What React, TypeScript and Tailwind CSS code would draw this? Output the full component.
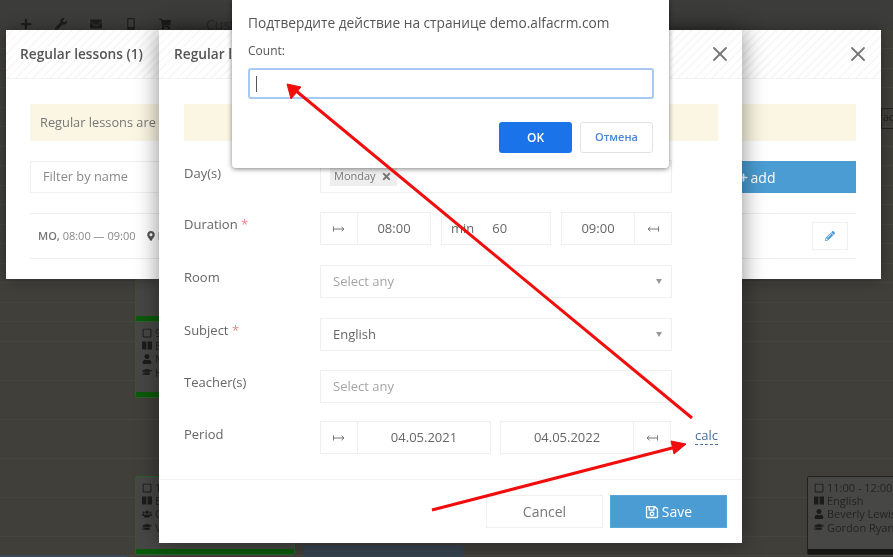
import { X } from 'lucide-react';
import {
  FaEnvelope,
  FaGraduationCap,
  FaMapMarkerAlt,
  FaMobileAlt,
  FaPencilAlt,
  FaPlus,
  FaRegSave,
  FaRegSquare,
  FaShoppingCart,
  FaTimes,
  FaUser,
  FaUsers,
  FaWrench,
} from 'react-icons/fa';

const hatch =
  'bg-[repeating-linear-gradient(135deg,#ffffff_0px,#ffffff_4px,#f8f8f8_4px,#f8f8f8_6px)]';

const BookIcon = () => (
  <svg width="10" height="9" viewBox="0 0 10 9" fill="currentColor">
    <path d="M0 0.5h4.4v8H0zM5.6 0.5H10v8H5.6z" />
  </svg>
);

const ArrowCell = ({ flip = false }: { flip?: boolean }) => (
  <div className="flex h-full w-[36px] shrink-0 items-center justify-center">
    <svg width="12" height="8" viewBox="0 0 12 8" className={flip ? 'rotate-180' : ''} fill="none" stroke="#777" strokeWidth="1">
      <path d="M0.5 1.5v5M0.5 4h10.5M8.5 1.8L11 4L8.5 6.2" />
    </svg>
  </div>
);

const Field = ({ label, required, children, cls, labelCls = 'pt-[3px]' }: { label: string; required?: boolean; children: React.ReactNode; cls: string; labelCls?: string }) => (
  <div className={`flex ${cls}`}>
    <div className={`w-[136px] shrink-0 text-[13px] leading-[18px] text-[#666] ${labelCls}`}>
      {label}
      {required && <span className="text-[#f0808a]"> *</span>}
    </div>
    {children}
  </div>
);

const Select = ({ text, muted, arrow = true }: { text: string; muted?: boolean; arrow?: boolean }) => (
  <div className={`flex h-full w-[352px] items-center justify-between border border-[#efefef] pl-[12px] pr-[9px] text-[13px] ${muted ? 'text-[#a5a5a5]' : 'text-[#666]'}`}>
    <span>{text}</span>
    {arrow && <span className="h-0 w-0 border-x-[3px] border-t-[5px] border-x-transparent border-t-[#999]" />}
  </div>
);

const Card = ({ cls, bar, lines }: { cls: string; bar: string; lines: [React.ReactNode, string][] }) => (
  <div className={`absolute flex flex-col justify-between overflow-hidden rounded-[2px] border bg-[#474745] ${cls}`}>
    <div className="flex flex-col px-[6px] pt-[4px] text-[11px] leading-[13.2px] whitespace-nowrap text-[#24241f]">
      {lines.map(([icon, text], i) => (
        <div key={i} className="flex items-center gap-[3px]">
          <span className="w-[10px] shrink-0 text-[10px] text-[#1c1c1a]">{icon}</span>
          <span>{text}</span>
        </div>
      ))}
    </div>
    <div className={`h-[5px] shrink-0 ${bar}`} />
  </div>
);

export default function App() {
  return (
    <div className="relative h-[557px] w-[893px] overflow-hidden bg-[#3f3e39] font-['Open_Sans',sans-serif] blur-[0.4px]">
      {/* page behind the modals */}
      <div className="flex h-[30px] items-center gap-[20px] bg-[#3c3c3b] pl-[20px] pt-[18px] text-[14px] text-[#1c1c1c]">
        <FaPlus className="h-[12px] w-[12px]" />
        <FaWrench className="ml-[3px] h-[12px] w-[12px]" />
        <FaEnvelope className="ml-[3px] h-[12px] w-[12px]" />
        <FaMobileAlt className="ml-[3px] h-[12px] w-[12px]" />
        <FaShoppingCart className="ml-[2px] h-[12px] w-[12px]" />
        <span className="ml-[15px] text-[#2a2a2a]">Customers</span>
      </div>
      <div className="h-[527px] bg-[repeating-linear-gradient(180deg,#403f3a_0px,#403f3a_18.5px,#464540_18.5px,#464540_19.5px)]" />

      <div className="absolute left-[881px] top-[108px] h-[21px] w-[20px] border-y border-l border-[#222] pl-[1px] text-[11px] text-[#222]">ad</div>
      <Card cls="left-[135px] top-[278px] h-[44px] w-[160px] border-[#2c5f2c]" bar="bg-[#0b5a0b]" lines={[]} />
      <Card
        cls="left-[135px] top-[321px] h-[77px] w-[160px] border-[#2c5f2c]"
        bar="bg-[#0b5a0b]"
        lines={[
          [<FaRegSquare />, '9:00 - 10:00'],
          [<BookIcon />, 'English'],
          [<FaUser />, 'Mary'],
          [<FaGraduationCap />, 'Hanna'],
        ]}
      />
      <Card
        cls="left-[135px] top-[476px] h-[79px] w-[160px] border-[#2c5f2c]"
        bar="bg-[#0b5a0b]"
        lines={[
          [<FaRegSquare />, '10:00 - 11:00'],
          [<BookIcon />, 'English'],
          [<FaUsers />, 'Group'],
          [<FaGraduationCap />, 'Victor'],
        ]}
      />
      <Card
        cls="left-[807px] top-[476px] h-[79px] w-[100px] border-[#222]"
        bar="bg-[#141414]"
        lines={[
          [<FaRegSquare />, '11:00 - 12:00'],
          [<BookIcon />, 'English'],
          [<FaUser />, 'Beverly Lewis'],
          [<FaGraduationCap />, 'Gordon Ryan'],
        ]}
      />
      <div className="absolute left-[303px] top-[545px] h-[12px] w-[160px] bg-[#36434f]" />
      <div className="absolute left-0 top-[555px] h-[2px] w-[127px] bg-[#3b4a58]" />

      {/* list modal */}
      <div className="absolute left-[6px] top-[30px] flex h-[249px] w-[875px] flex-col bg-white shadow-[0_0_14px_rgba(0,0,0,0.35)]">
        <div className={`flex h-[49px] items-center justify-between border-b border-[#f3f3f3] pl-[14px] pr-[11px] ${hatch}`}>
          <span className="text-[13.7px] font-semibold text-[#555]">Regular lessons (1)</span>
          <X className="h-[24px] w-[24px] text-[#777]" strokeWidth={1.8} />
        </div>
        <div className="flex flex-col pl-[24px] pr-[25px] pt-[25px]">
          <div className="flex h-[37px] items-center bg-[#fbf6e3] pl-[10px] text-[12.8px] text-[#777]">Regular lessons are repeated every week</div>
          <div className="mt-[20px] flex h-[32px] gap-[10px]">
            <div className="flex flex-1 items-center border border-[#efefef] pl-[12px] text-[12.8px] text-[#888]">Filter by name</div>
            <div className="flex w-[198px] items-center justify-center gap-[3px] bg-[#4a9cd2] text-[14px] text-white">
              <FaPlus className="h-[9px] w-[9px]" />
              add
            </div>
          </div>
          <div className="mt-[20px] flex h-[46px] items-center justify-between border-y border-[#eeeeee] pl-[8px] pr-[8px]">
            <div className="flex items-center gap-[12px] text-[11px] text-[#888]">
              <span>
                <b className="font-semibold text-[#777]">MO,</b> 08:00 — 09:00
              </span>
              <span className="flex items-center gap-[2px]">
                <FaMapMarkerAlt className="h-[10px] w-[8px] text-[#555]" />
                Room 1
              </span>
            </div>
            <div className="flex h-[28px] w-[36px] items-center justify-center border border-[#f0f0f0]">
              <FaPencilAlt className="h-[10px] w-[10px] text-[#4a9cd2]" />
            </div>
          </div>
        </div>
      </div>

      {/* edit modal */}
      <div className="absolute left-[159px] top-[30px] flex h-[513px] w-[583px] flex-col bg-white shadow-[0_0_22px_rgba(0,0,0,0.45)]">
        <div className={`flex h-[49px] shrink-0 items-center justify-between border-b border-[#f3f3f3] pl-[15px] pr-[10px] ${hatch}`}>
          <span className="text-[13.7px] font-semibold text-[#555]">Regular lesson</span>
          <X className="h-[24px] w-[24px] text-[#777]" strokeWidth={1.8} />
        </div>
        <div className="flex h-[401px] flex-col border-b border-[#f3f3f3] pl-[25px] pr-[24px] pt-[25px]">
          <div className="h-[37px] shrink-0 bg-[#fbf6e3]" />
          <Field label="Day(s)" cls="mt-[19px] h-[33px]" labelCls="pt-[4px]">
            <div className="flex w-[352px] items-center border border-[#efefef] pl-[9px]">
              <span className="flex h-[18px] w-[67px] items-center gap-[5px] bg-[#eeeeee] pl-[4px] text-[11px] text-[#777]">
                Monday
                <FaTimes className="h-[11px] w-[11px] text-[#777]" />
              </span>
            </div>
          </Field>
          <Field label="Duration" required cls="mt-[19px] h-[33px]">
            <div className="flex w-[352px] justify-between">
              <div className="flex w-[111px] items-center border border-[#efefef] text-[13px] text-[#666]">
                <ArrowCell />
                <div className="flex h-full flex-1 items-center justify-center border-l border-[#efefef]">08:00</div>
              </div>
              <div className="flex w-[110px] items-center gap-[18px] border border-[#efefef] pl-[9px] text-[13px] text-[#666]">
                <span>min</span>
                <span>60</span>
              </div>
              <div className="flex w-[111px] items-center border border-[#efefef] text-[13px] text-[#666]">
                <div className="flex h-full flex-1 items-center justify-center border-r border-[#efefef]">09:00</div>
                <ArrowCell flip />
              </div>
            </div>
          </Field>
          <Field label="Room" cls="mt-[20px] h-[33px]">
            <Select text="Select any" muted />
          </Field>
          <Field label="Subject" required cls="mt-[20px] h-[33px]">
            <Select text="English" />
          </Field>
          <Field label="Teacher(s)" cls="mt-[19px] h-[33px]">
            <Select text="Select any" muted arrow={false} />
          </Field>
          <Field label="Period" cls="mt-[18px] h-[33px]" labelCls="pt-[4px]">
            <div className="flex w-[352px] justify-between text-[13px] text-[#666]">
              <div className="flex w-[171px] items-center border border-[#efefef]">
                <ArrowCell />
                <div className="flex h-full flex-1 items-center justify-center border-l border-[#efefef]">04.05.2021</div>
              </div>
              <div className="flex w-[171px] items-center border border-[#efefef]">
                <div className="flex h-full flex-1 items-center justify-center border-r border-[#efefef]">04.05.2022</div>
                <ArrowCell flip />
              </div>
            </div>
            <span className="ml-[24px] mt-[6px] h-[18px] border-b border-dashed border-[#4a6f9c] text-[13px] leading-[16px] text-[#4a6f9c]">calc</span>
          </Field>
        </div>
        <div className="flex justify-end gap-[7px] pr-[15px] pt-[15px]">
          <div className="flex h-[33px] w-[117px] items-center justify-center border border-[#f0f0f0] text-[14px] text-[#777]">Cancel</div>
          <div className="flex h-[33px] w-[117px] items-center justify-center gap-[3px] border border-[#5aa5d8] bg-[#4a9cd2] text-[14px] font-medium text-white">
            <FaRegSave className="h-[14px] w-[14px]" />
            Save
          </div>
        </div>
      </div>

      {/* browser prompt */}
      <div className="absolute left-[232px] top-0 flex h-[168px] w-[437px] flex-col rounded-b-[4px] bg-white px-[16px] shadow-[0_1px_5px_rgba(0,0,0,0.5)]">
        <div className="mt-[13px] h-[20px] text-[13.7px] leading-[20px] whitespace-nowrap text-[#555]">Подтвердите действие на странице demo.alfacrm.com</div>
        <div className="mt-[10px] text-[12px] leading-[16px] text-[#555]">Count:</div>
        <div className="mt-[9px] flex h-[31px] w-[406px] items-center rounded-[3px] border-2 border-[#a9c9f5] pl-[6px]">
          <span className="h-[16px] w-px bg-[#555]" />
        </div>
        <div className="mt-[23px] flex justify-end gap-[8px]">
          <div className="flex h-[31px] w-[73px] items-center justify-center rounded-[3px] bg-[#1a73e8] text-[12px] font-semibold text-white">OK</div>
          <div className="flex h-[31px] w-[73px] items-center justify-center rounded-[3px] border border-[#e2e2e2] text-[11px] font-semibold text-[#4a86d8]">Отмена</div>
        </div>
      </div>

      {/* annotation arrows */}
      <svg className="absolute left-0 top-0" width="893" height="557" viewBox="0 0 893 557" fill="none">
        <path d="M692 418L295 90" stroke="#f20d0d" strokeWidth="3" />
        <path d="M287 84L301 87L291 99Z" fill="#f20d0d" stroke="#f20d0d" />
        <path d="M432 510L676 447" stroke="#f20d0d" strokeWidth="3" />
        <path d="M686 444L671 441L674 454Z" fill="#f20d0d" stroke="#f20d0d" />
      </svg>
    </div>
  );
}
